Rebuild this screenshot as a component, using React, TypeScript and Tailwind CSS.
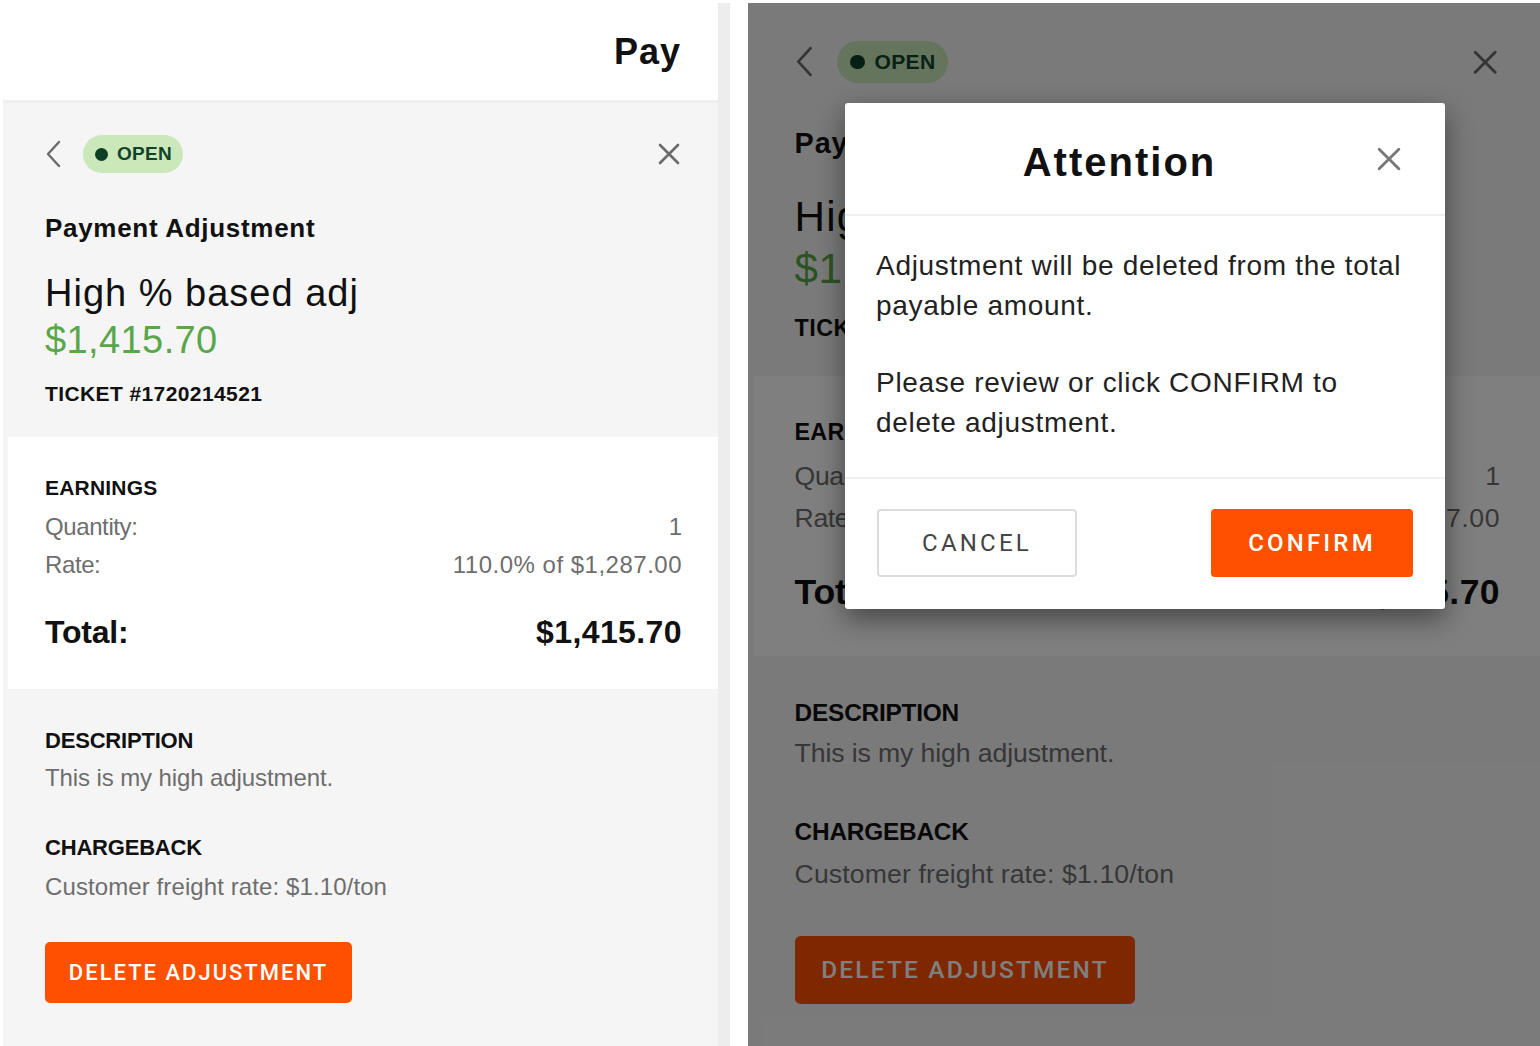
const sans = "font-['Liberation_Sans',Arial,sans-serif]";

function Chevron() {
  return (
    <svg width="16" height="28" viewBox="0 0 16 28" fill="none">
      <polyline points="14,2 3,14 14,26" stroke="#6b6b6b" strokeWidth="2.4" strokeLinecap="round" strokeLinejoin="round" />
    </svg>
  );
}

function Cross({ size = 22, color = "#6b6b6b" }: { size?: number; color?: string }) {
  return (
    <svg width={size} height={size} viewBox="0 0 22 22" fill="none">
      <line x1="2" y1="2" x2="20" y2="20" stroke={color} strokeWidth="2.6" strokeLinecap="round" />
      <line x1="20" y1="2" x2="2" y2="20" stroke={color} strokeWidth="2.6" strokeLinecap="round" />
    </svg>
  );
}

function Detail() {
  return (
    <div className={`bg-[#f5f5f5] text-[#111] ${sans}`}>
      <div className="pl-[42px] pr-9 pt-8 pb-[30px]">
        <div className="flex items-center">
          <Chevron />
          <div className="ml-[22px] flex h-[38px] items-center gap-[9px] rounded-full bg-[#cbe8bb] pl-3 pr-[11px]">
            <span className="h-[13px] w-[13px] rounded-full bg-[#0c3f25]" />
            <span className="text-[19px] font-bold tracking-[0.3px] text-[#10432a]">OPEN</span>
          </div>
          <div className="flex-1" />
          <div className="mr-[2px]">
            <Cross />
          </div>
        </div>
        <div className="mt-10 text-[26px] font-bold leading-[30px] tracking-[0.7px]">Payment Adjustment</div>
        <div className="mt-[27px] text-[38px] leading-[47px] tracking-[1px]">High % based adj</div>
        <div className="text-[38px] leading-[47px] tracking-[0.4px] text-[#5aa64b]">$1,415.70</div>
        <div className="mt-[17px] text-[21px] font-bold leading-[26px] tracking-[0.4px]">TICKET #1720214521</div>
      </div>

      <div className="ml-[5px] bg-white pl-[37px] pr-9 pt-[38px] pb-[37px]">
        <div className="text-[21px] font-bold leading-[26px] tracking-[0.2px]">EARNINGS</div>
        <div className="mt-[7px] text-[24px] leading-[38px] text-[#6e6e6e]">
          <div className="flex justify-between">
            <span className="tracking-[-0.4px]">Quantity:</span>
            <span>1</span>
          </div>
          <div className="flex justify-between">
            <span className="tracking-[-0.4px]">Rate:</span>
            <span className="tracking-[0.5px]">110.0% of $1,287.00</span>
          </div>
        </div>
        <div className="mt-[28px] flex justify-between text-[32px] font-bold leading-[40px]">
          <span className="tracking-[-0.2px]">Total:</span>
          <span className="tracking-[0.4px]">$1,415.70</span>
        </div>
      </div>

      <div className="pl-[42px] pr-9 pt-[39px] pb-[60px]">
        <div className="text-[22px] font-bold leading-[26px] tracking-[-0.2px]">DESCRIPTION</div>
        <div className="mt-[6px] text-[24px] leading-[36px] tracking-[-0.1px] text-[#6e6e6e]">This is my high adjustment.</div>
        <div className="mt-[39px] text-[22px] font-bold leading-[26px] tracking-[-0.2px]">CHARGEBACK</div>
        <div className="mt-[8px] text-[24px] leading-[36px] tracking-[0.1px] text-[#6e6e6e]">Customer freight rate: $1.10/ton</div>
        <button className="mt-[37px] flex h-[61px] w-[307px] items-center justify-center rounded-[5px] bg-[#ff5000] font-['Roboto',Arial,sans-serif] text-[22px] font-medium tracking-[2px] text-white">
          DELETE ADJUSTMENT
        </button>
      </div>
    </div>
  );
}

function ConfirmModal() {
  return (
    <div className={`absolute left-[97px] top-[100px] w-[600px] rounded-[3px] bg-white shadow-[0_10px_28px_rgba(0,0,0,0.45)] ${sans}`}>
      <div className="flex h-[111px] items-center gap-[14px] pl-[31px] pr-[44px] pt-[6px]">
        <div className="flex-1 text-center text-[40px] font-bold tracking-[2px] text-[#111]">Attention</div>
        <div className="-mt-[6px]">
          <Cross size={24} color="#777" />
        </div>
      </div>
      <div className="h-[2px] bg-[#efefef]" />
      <div className="px-[31px] pt-[30px] pb-[34px] text-[28px] leading-[40px] tracking-[0.7px] text-[#222]">
        <p>
          Adjustment will be deleted from the total
          <br />
          payable amount.
        </p>
        <p className="mt-[37px]">
          Please review or click CONFIRM to
          <br />
          delete adjustment.
        </p>
      </div>
      <div className="h-[2px] bg-[#efefef]" />
      <div className="flex justify-between px-[32px] pt-[30px] pb-[32px] font-['Roboto',Arial,sans-serif] text-[24px] tracking-[3.2px]">
        <button className="h-[68px] w-[200px] rounded-[4px] border-2 border-[#dcdcdc] bg-white text-[#444]">CANCEL</button>
        <button className="h-[68px] w-[202px] rounded-[4px] bg-[#ff5000] font-medium text-white">CONFIRM</button>
      </div>
    </div>
  );
}

export default function App() {
  return (
    <div className="flex h-[1046px] w-[1540px] overflow-hidden bg-white pt-[3px]">
      <div className="ml-[3px] flex w-[715px] flex-col">
        <div className={`flex h-[100px] shrink-0 items-center justify-end border-b-[3px] border-[#efefef] bg-white pr-[37px] ${sans}`}>
          <span className="text-[36px] font-bold tracking-[1px] text-[#111]">Pay</span>
        </div>
        <div className="flex-1 bg-[#f5f5f5]">
          <Detail />
        </div>
      </div>
      <div className="w-[12px] bg-[#ededed]" />
      <div className="w-[18px]" />
      <div className="relative flex-1 overflow-hidden bg-[#f5f5f5]">
        <div className="pt-[2px] [zoom:1.11]">
          <Detail />
        </div>
        <div className="absolute inset-0 bg-black/50" />
        <ConfirmModal />
      </div>
    </div>
  );
}
